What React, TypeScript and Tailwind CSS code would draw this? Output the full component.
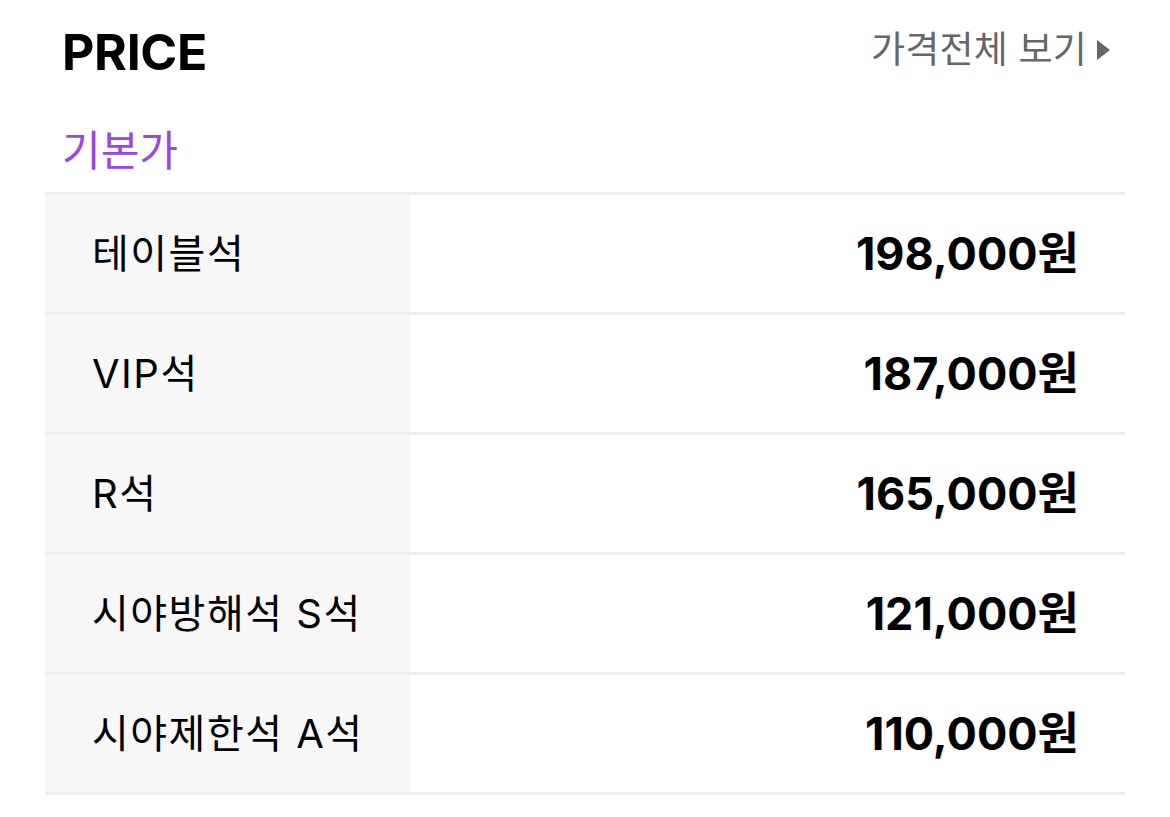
const prices = [
  { name: "테이블석", price: "198,000원" },
  { name: "VIP석", price: "187,000원" },
  { name: "R석", price: "165,000원" },
  { name: "시야방해석 S석", price: "121,000원" },
  { name: "시야제한석 A석", price: "110,000원" },
];

const App = () => {
  return (
    <div
      className="w-[1170px] h-[817px] bg-white px-[45px] pt-[27px]"
      style={{ fontFamily: 'Inter, "Noto Sans CJK KR", sans-serif' }}
    >
      <div className="flex items-start justify-between pl-[17px] pr-[15px]">
        <h2 className="text-[50px] leading-none font-bold text-black tracking-[-0.3px]">
          PRICE
        </h2>
        <a className="flex items-center gap-[10px] text-[37px] leading-none tracking-[0.2px] text-[#666666] mt-[4px] whitespace-nowrap">
          <span>가격전체 보기</span>
          <svg
            className="shrink-0 w-[13px] h-[20px]"
            viewBox="0 0 13 20"
            fill="#666666"
          >
            <path d="M0 0 L13 10 L0 20 Z" />
          </svg>
        </a>
      </div>

      <div className="pl-[17px] mt-[53px] text-[42px] leading-none text-[#9a45e6]">
        기본가
      </div>

      <div className="mt-[20px] border-b-[3px] border-[#eeeeee]">
        {prices.map((p) => (
          <div
            key={p.name}
            className="flex h-[120px] border-t-[3px] border-[#eeeeee]"
          >
            <div className="w-[365px] bg-[#f7f7f7] flex items-center pl-[47px] text-[40px] tracking-[1.5px] text-black">
              {p.name}
            </div>
            <div className="flex-1 flex items-center justify-end pr-[46px] text-[45px] font-bold text-black">
              {p.price}
            </div>
          </div>
        ))}
      </div>
    </div>
  );
};

export default App;
